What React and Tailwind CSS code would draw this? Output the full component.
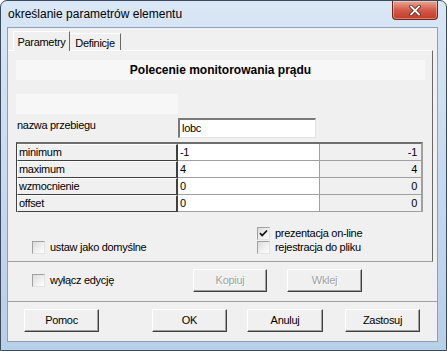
import { useState } from 'react'

const raised =
  'border border-t-white border-l-white border-r-[#404040] border-b-[#404040] shadow-[inset_-1px_-1px_0_#a0a0a0]'

function Check({ checked, onChange, label, className = '' }) {
  return (
    <label className={`flex items-center h-[14px] cursor-default ${className}`} onClick={onChange}>
      <span className="w-[13px] h-[13px] border border-t-[#a0a0a0] border-l-[#a0a0a0] border-r-[#e3e3e3] border-b-[#e3e3e3] bg-gradient-to-br from-[#dcdcdc] to-white flex items-center justify-center">
        {checked && (
          <svg className="w-[9px] h-[9px]" viewBox="0 0 9 9">
            <path d="M1 4.2l2.2 2.3L8 1.5" fill="none" stroke="#111" strokeWidth="1.7" />
          </svg>
        )}
      </span>
      <span className="ml-[5px]">{label}</span>
    </label>
  )
}

function Btn({ children, disabled, className = '' }) {
  return (
    <button
      className={`h-[23px] ${raised} bg-[#f0f0f0] flex items-center justify-center tracking-[-0.3px] ${disabled ? 'text-[#a0a0a0] [text-shadow:1px_1px_0_#fff]' : 'text-black'} ${className}`}
    >
      {children}
    </button>
  )
}

const rows = [
  ['minimum', '-1', '-1'],
  ['maximum', '4', '4'],
  ['wzmocnienie', '0', '0'],
  ['offset', '0', '0'],
]

export default function App() {
  const [online, setOnline] = useState(true)
  const [plik, setPlik] = useState(false)
  const [domyslne, setDomyslne] = useState(false)
  const [edycja, setEdycja] = useState(false)

  return (
    <div className="w-[447px] h-[351px] overflow-hidden rounded-t-[7px] border border-[#3b4b5f] bg-gradient-to-b from-[#d9e7f6] via-[#c6daf0] to-[#b8cfe8] flex flex-col font-['Liberation_Sans',Arial,sans-serif] text-[11px] tracking-[-0.3px] text-black relative">
      {/* title bar */}
      <div className="h-[26px] flex items-center pl-[7px] shrink-0">
        <span className="text-[12px] tracking-normal text-black -mt-[1px]">określanie parametrów elementu</span>
        <button className="absolute top-0 right-[8px] w-[46px] h-[19px] rounded-b-[4px] border border-t-0 border-[#6a2a22] bg-gradient-to-b from-[#e8a697] via-[#d35a47] to-[#c33a26] flex items-center justify-center shadow-[inset_0_0_0_1px_rgba(255,255,255,0.35)]">
          <svg className="w-[12px] h-[11px]" viewBox="0 0 12 11">
            <path d="M2 1.5l8 8M10 1.5l-8 8" stroke="#5a231b" strokeWidth="3.4" strokeLinecap="square" />
            <path d="M2 1.5l8 8M10 1.5l-8 8" stroke="#fff" strokeWidth="1.8" strokeLinecap="square" />
          </svg>
        </button>
      </div>

      {/* client area */}
      <div className="ml-[6px] mr-[8px] h-[315px] border border-[#8b9fb8] bg-[#f0f0f0] flex flex-col">
        {/* tabs */}
        <div className="h-[22px] flex items-end pl-[5px] shrink-0">
          <div className="h-[20px] w-[57px] -mb-px relative z-10 bg-[#f0f0f0] border-t border-l border-white border-r border-r-[#696969] flex items-start justify-center pt-[2px]">
            Parametry
          </div>
          <div className="h-[17px] w-[51px] border-t border-white border-r border-r-[#696969] flex items-start justify-center pt-[1px]">
            Definicje
          </div>
        </div>

        {/* panel */}
        <div className="mr-[4px] h-[212px] border-t border-white border-r border-r-[#696969] border-b border-b-[#a0a0a0] flex flex-col shrink-0">
          <div className="mt-[9px] ml-[8px] mr-[7px] h-[20px] bg-[#f7f7f7] flex items-center justify-center font-bold text-[12px] tracking-normal">
            Polecenie monitorowania prądu
          </div>
          <div className="mt-[14px] ml-[8px] w-[162px] h-[20px] bg-[#f7f7f7]" />

          <div className="mt-[4px] ml-[8px] flex items-start">
            <span className="w-[162px] pl-[1px] -mt-[1px]">nazwa przebiegu</span>
            <div className="w-[138px] h-[20px] bg-white border-t-2 border-l-2 border-t-[#7a7a7a] border-l-[#7a7a7a] border-r border-b border-r-[#e3e3e3] border-b-[#e3e3e3] flex items-center pl-[2px]">
              lobc
            </div>
          </div>

          {/* grid */}
          <div className="mt-[4px] ml-[8px] w-[407px] border-t-2 border-t-[#6e6e6e] border-l border-l-[#404040] border-r-2 border-r-[#a0a0a0] flex flex-col">
            {rows.map(([name, val, cur]) => (
              <div key={name} className="h-[17px] flex">
                <div className="w-[161px] border-t border-l border-white border-r-2 border-b border-r-[#404040] border-b-[#404040] bg-[#f0f0f0] flex items-center pl-[1px]">
                  {name}
                </div>
                <div className="w-[142px] bg-white border-b border-r border-[#a0a0a0] flex items-center pl-[2px]">
                  {val}
                </div>
                <div className="flex-1 border-b border-[#a0a0a0] flex items-center justify-end pr-[4px]">
                  {cur}
                </div>
              </div>
            ))}
          </div>

          <div className="mt-[14px] flex">
            <div className="w-[249px] pl-[24px] pt-[14px]">
              <Check checked={domyslne} onChange={() => setDomyslne(!domyslne)} label="ustaw jako domyślne" />
            </div>
            <div className="flex flex-col">
              <Check checked={online} onChange={() => setOnline(!online)} label="prezentacja on-line" />
              <Check checked={plik} onChange={() => setPlik(!plik)} label="rejestracja do pliku" />
            </div>
          </div>
        </div>

        {/* edit row */}
        <div className="h-[40px] border-b border-b-[#a0a0a0] flex items-start shrink-0">
          <Check
            checked={edycja}
            onChange={() => setEdycja(!edycja)}
            label="wyłącz edycję"
            className="ml-[24px] mt-[11px] w-[161px]"
          />
          <Btn disabled className="mt-[7px] w-[74px] h-[21px]">Kopiuj</Btn>
          <Btn disabled className="mt-[7px] ml-[20px] w-[75px] h-[21px]">Wklej</Btn>
        </div>

        {/* buttons */}
        <div className="flex pt-[7px]">
          <Btn className="ml-[16px] w-[75px]">Pomoc</Btn>
          <Btn className="ml-[53px] w-[75px]">OK</Btn>
          <Btn className="ml-[20px] w-[76px]">Anuluj</Btn>
          <Btn className="ml-[22px] w-[75px]">Zastosuj</Btn>
        </div>
      </div>
    </div>
  )
}
